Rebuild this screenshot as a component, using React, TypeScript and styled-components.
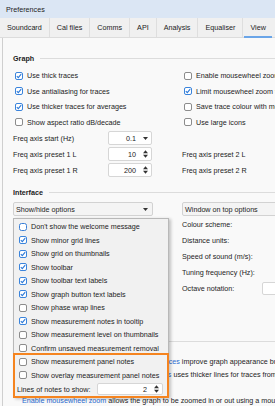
import React from "react";
import styled, { createGlobalStyle, css } from "styled-components";

/**
 * Styled
 */
const GlobalStyle = createGlobalStyle`
  html, body {
    margin: 0;
    padding: 0;
    background: #f9f9f9;
  }
  body {
    font-family: "Liberation Sans", Arial, sans-serif;
    font-size: 7.2px;
    color: #1c1c1c;
  }
`;

const Window = styled.div`
  width: 275px;
  height: 406px;
  overflow: hidden;
  background: #f9f9f9;
`;

const TitleBar = styled.div`
  height: 18px;
  display: flex;
  align-items: center;
  padding-left: 6px;
  box-sizing: border-box;
  background: #dbe6f4;
`;

const TabBar = styled.div`
  height: 20px;
  display: flex;
  box-sizing: border-box;
  background: #f0f0f0;
  border-bottom: 1px solid #dcdcdc;
  white-space: nowrap;
`;

const Tab = styled.div<{ $active?: boolean }>`
  position: relative;
  display: flex;
  align-items: center;
  padding: 0 7px;
  border-right: 1px solid #dedede;
  ${(p) =>
    p.$active &&
    css`
      border-right: none;
      &::after {
        content: "";
        position: absolute;
        left: 1px;
        right: 1px;
        bottom: -1px;
        height: 2px;
        background: #6aa5e8;
      }
    `}
`;

const Content = styled.div`
  width: 420px;
  margin-left: 2px;
  padding-top: 14px;
  padding-left: 10px;
  border-left: 1px solid #cfcfcf;
  white-space: nowrap;
`;

const SectionHeading = styled.div<{ $top?: number }>`
  display: flex;
  align-items: center;
  gap: 6px;
  height: 12px;
  margin-top: ${(p) => p.$top ?? 0}px;
  font-weight: bold;
  &::after {
    content: "";
    flex: 1;
    height: 1px;
    background: #dcdcdc;
  }
`;

const Columns = styled.div<{ $top?: number }>`
  display: grid;
  grid-template-columns: 156px 1fr;
  column-gap: 13px;
  margin-top: ${(p) => p.$top ?? 0}px;
`;

const Column = styled.div`
  position: relative;
  display: flex;
  flex-direction: column;
`;

const CheckRow = styled.div`
  display: flex;
  align-items: center;
  gap: 4px;
  height: 15.5px;
  padding-left: 2px;
`;

const Box = styled.span<{ $checked?: boolean; $focus?: boolean }>`
  width: 8px;
  height: 8px;
  flex: none;
  display: flex;
  align-items: center;
  justify-content: center;
  box-sizing: border-box;
  border-radius: 2px;
  background: #fff;
  border: 1px solid #8c8c8c;
  ${(p) =>
    p.$checked &&
    css`
      border-color: #3a84dc;
    `}
  ${(p) =>
    p.$focus &&
    css`
      border: 1.4px solid #3a7fd6;
      border-radius: 2.5px;
    `}
`;

const FieldRow = styled.div`
  display: flex;
  align-items: center;
  height: 16px;
`;

const FieldLabel = styled.span<{ $w?: number }>`
  width: ${(p) => p.$w ?? 95}px;
  flex: none;
`;

const Input = styled.div<{ $w: number; $h?: number }>`
  width: ${(p) => p.$w}px;
  height: ${(p) => p.$h ?? 14}px;
  flex: none;
  display: flex;
  align-items: center;
  justify-content: flex-end;
  gap: 7px;
  padding-right: 3px;
  box-sizing: border-box;
  background: #fff;
  border: 1px solid #d6d6d6;
  border-radius: 2px;
`;

const Combo = styled.div<{ $w?: number }>`
  width: ${(p) => (p.$w ? `${p.$w}px` : "auto")};
  height: 14px;
  display: flex;
  align-items: center;
  justify-content: space-between;
  padding: 0 4px 0 2px;
  box-sizing: border-box;
  background: #f4f4f4;
  border: 1px solid #d2d2d2;
  border-radius: 2px;
`;

const Popup = styled.div`
  position: absolute;
  top: 16px;
  left: 0;
  width: 156px;
  padding-top: 1px;
  box-sizing: border-box;
  background: #f1f1f1;
  border: 1px solid #b8b8b8;
  box-shadow: 2px 1px 3px rgba(0, 0, 0, 0.22);
  z-index: 2;
`;

const PopupItem = styled.div`
  display: flex;
  align-items: center;
  gap: 4px;
  height: 13.5px;
  padding-left: 5px;
`;

const Highlight = styled.div`
  margin: -2px -1px -1px;
  border: 2px solid #f5841f;
  ${PopupItem} {
    padding-left: 4px;
  }
`;

const LinesRow = styled.div`
  display: flex;
  align-items: center;
  height: 14px;
  padding-left: 2px;
`;

const Help = styled.div`
  margin-top: 45px;
  padding: 12.5px 0 0 9px;
  border-top: 1px solid #dcdcdc;
  line-height: 13px;
`;

const HelpLine = styled.div`
  height: 13px;
`;

const Link = styled.span`
  color: #2a6bd0;
`;

/**
 * Parts
 */
const Check: React.FC<{ checked?: boolean; focus?: boolean }> = ({ checked, focus }) => (
  <Box $checked={checked} $focus={focus}>
    {checked && (
      <svg width="6" height="6" viewBox="0 0 6 6">
        <path d="M0.8 3.1 L2.3 4.6 L5.2 1.2" fill="none" stroke="#2a78d8" strokeWidth="1.1" />
      </svg>
    )}
  </Box>
);

const SpinArrows = () => (
  <svg width="5" height="8" viewBox="0 0 5 8">
    <path d="M0 3.3 L2.5 0.3 L5 3.3 Z M0 4.7 L5 4.7 L2.5 7.7 Z" fill="#333" />
  </svg>
);

const DropArrow = () => (
  <svg width="5" height="3" viewBox="0 0 5 3">
    <path d="M0 0 L5 0 L2.5 3 Z" fill="#333" />
  </svg>
);

const tabs = ["Soundcard", "Cal files", "Comms", "API", "Analysis", "Equaliser", "View"];

const graphLeft: [string, boolean][] = [
  ["Use thick traces", true],
  ["Use antialiasing for traces", true],
  ["Use thicker traces for averages", true],
  ["Show aspect ratio dB/decade", false],
];

const graphRight: [string, boolean][] = [
  ["Enable mousewheel zoom", false],
  ["Limit mousewheel zoom to graph area", true],
  ["Save trace colour with measurement", false],
  ["Use large icons", false],
];

const showHide: [string, boolean][] = [
  ["Don't show the welcome message", false],
  ["Show minor grid lines", true],
  ["Show grid on thumbnails", true],
  ["Show toolbar", true],
  ["Show toolbar text labels", true],
  ["Show graph button text labels", true],
  ["Show phase wrap lines", false],
  ["Show measurement notes in tooltip", true],
  ["Show measurement level on thumbnails", false],
  ["Confirm unsaved measurement removal", false],
];

const rightLabels = [
  "Colour scheme:",
  "Distance units:",
  "Speed of sound (m/s):",
  "Tuning frequency (Hz):",
];

export default function App() {
  return (
    <Window>
      <GlobalStyle />
      <TitleBar>Preferences</TitleBar>
      <TabBar>
        {tabs.map((t) => (
          <Tab key={t} $active={t === "View"}>
            {t}
          </Tab>
        ))}
      </TabBar>

      <Content>
        <SectionHeading>Graph</SectionHeading>
        <Columns $top={4}>
          <Column>
            {graphLeft.map(([label, on]) => (
              <CheckRow key={label}>
                <Check checked={on} />
                {label}
              </CheckRow>
            ))}
            <FieldRow>
              <FieldLabel>Freq axis start (Hz)</FieldLabel>
              <Input $w={44}>
                0.1
                <DropArrow />
              </Input>
            </FieldRow>
            <FieldRow>
              <FieldLabel>Freq axis preset 1 L</FieldLabel>
              <Input $w={44}>
                10
                <SpinArrows />
              </Input>
            </FieldRow>
            <FieldRow>
              <FieldLabel>Freq axis preset 1 R</FieldLabel>
              <Input $w={44}>
                200
                <SpinArrows />
              </Input>
            </FieldRow>
          </Column>
          <Column>
            {graphRight.map(([label, on]) => (
              <CheckRow key={label}>
                <Check checked={on} />
                {label}
              </CheckRow>
            ))}
            <FieldRow />
            <FieldRow>Freq axis preset 2 L</FieldRow>
            <FieldRow>Freq axis preset 2 R</FieldRow>
          </Column>
        </Columns>

        <SectionHeading $top={8.5}>Interface</SectionHeading>
        <Columns $top={3.5}>
          <Column>
            <Combo $w={140}>
              Show/hide options
              <DropArrow />
            </Combo>
            <Popup>
              {showHide.map(([label, on], i) => (
                <PopupItem key={label}>
                  <Check checked={on} focus={i === 0} />
                  {label}
                </PopupItem>
              ))}
              <Highlight>
                <PopupItem>
                  <Check />
                  Show measurement panel notes
                </PopupItem>
                <PopupItem>
                  <Check />
                  Show overlay measurement panel notes
                </PopupItem>
                <LinesRow>
                  <FieldLabel $w={80}>Lines of notes to show:</FieldLabel>
                  <Input $w={66} $h={12}>
                    2
                    <SpinArrows />
                  </Input>
                </LinesRow>
              </Highlight>
            </Popup>
          </Column>
          <Column>
            <Combo $w={140}>
              Window on top options
              <DropArrow />
            </Combo>
            {rightLabels.map((l) => (
              <FieldRow key={l}>{l}</FieldRow>
            ))}
            <FieldRow>
              <FieldLabel $w={80}>Octave notation:</FieldLabel>
              <Input $w={60} $h={13} />
            </FieldRow>
          </Column>
        </Columns>

        <Help>
          <HelpLine>
            In <Link>Use thick traces</Link> and <Link>Use antialiasing for traces</Link> improve graph
            appearance but
          </HelpLine>
          <HelpLine>
            may be slower. <Link>Use thicker traces for averages</Link> uses thicker lines for traces from
            averages.
          </HelpLine>
          <HelpLine />
          <HelpLine>
            <Link>Enable mousewheel zoom</Link> allows the graph to be zoomed in or out using a mouse wheel.
          </HelpLine>
          <HelpLine>
            <Link>Limit mousewheel zoom</Link> restricts zooming to the graph area.
          </HelpLine>
        </Help>
      </Content>
    </Window>
  );
}
